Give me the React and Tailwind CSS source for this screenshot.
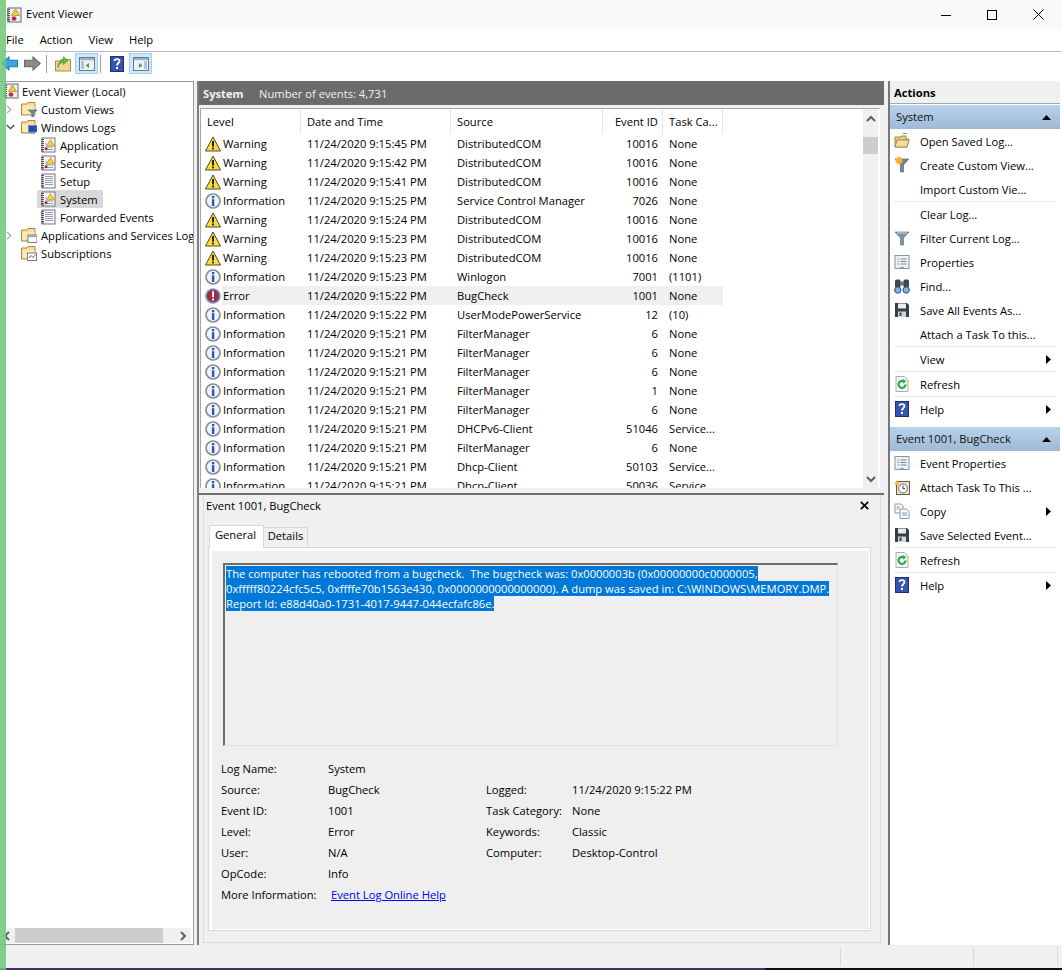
import React from "react";

const I = ({ s = 16, children, className = "" }) => (
  <svg width={s} height={s} viewBox="0 0 16 16" className={"shrink-0 " + className}>{children}</svg>
);

const Warn = () => (
  <I>
    <path d="M8 1 L15.5 15 H0.5 Z" fill="#fbdc3c" stroke="#4a4a30" strokeWidth="1" strokeLinejoin="round" />
    <rect x="7.1" y="5" width="1.8" height="5.6" fill="#111" />
    <rect x="7.1" y="11.6" width="1.8" height="1.8" fill="#111" />
  </I>
);
const Info = () => (
  <I>
    <circle cx="8" cy="8" r="7" fill="#f3f5fa" stroke="#858e9e" strokeWidth="1.7" />
    <rect x="6.9" y="3" width="2.4" height="2.3" fill="#2459b5" />
    <rect x="6.9" y="6.2" width="2.4" height="6.8" fill="#2459b5" />
  </I>
);
const Err = () => (
  <I>
    <circle cx="8" cy="8" r="7" fill="#9c2a48" stroke="#7f9ab8" strokeWidth="1.7" />
    <rect x="7.1" y="3.2" width="1.9" height="6.2" fill="#fff" />
    <rect x="7.1" y="10.6" width="1.9" height="2" fill="#fff" />
  </I>
);
const Log = ({ alert }) => (
  <I>
    <rect x="2" y="1" width="13" height="14" fill="#f8f8f8" stroke="#6f7680" />
    <path d="M1 2.5H4M1 4.5H4M1 6.5H4M1 8.5H4M1 10.5H4M1 12.5H4M1 14H4" stroke="#555" strokeWidth="1" />
    {alert ? (
      <>
        <path d="M10.5 2.5 L14.5 9 H6.5 Z" fill="#f7d23a" stroke="#9b8420" strokeWidth="0.6" />
        <path d="M5 7H7M5 10H13M5 12.5H13" stroke="#8f9fb5" />
        <rect x="4.6" y="10.2" width="3" height="3" rx="1.5" fill="#b3202e" />
      </>
    ) : (
      <path d="M5 3.5H13M5 5.5H13M5 7.5H13M5 9.5H13M5 11.5H13" stroke="#8fa0b8" />
    )}
  </I>
);
const RootLog = () => (
  <I>
    <rect x="2" y="1" width="13" height="14" fill="#eef0f3" stroke="#5f6a78" />
    <path d="M1 2.5H4M1 4.5H4M1 6.5H4M1 8.5H4M1 10.5H4M1 12.5H4M1 14H4" stroke="#555" />
    <path d="M9.5 2 L13.5 8.5 H5.5 Z" fill="#f3cd2e" stroke="#8a7720" strokeWidth="0.6" />
    <circle cx="8" cy="11.5" r="2.6" fill="#b42a3c" stroke="#fff" strokeWidth="0.6" />
  </I>
);
const FolderBase = () => (
  <>
    <path d="M0.5 3 H6 L7 1.5 H14 V14 H0.5 Z" fill="#f7dc9a" stroke="#a98b45" />
    <rect x="1.5" y="5" width="12" height="8" fill="#fbe9b6" />
  </>
);
const FolderFilter = () => (
  <I><FolderBase /><path d="M7 9 H16 L12.8 12.3 V16 H10.8 V12.3 Z" fill="#6f8aa0" stroke="#4c5f70" strokeWidth="0.6" /></I>
);
const FolderMon = () => (
  <I><FolderBase /><rect x="7.5" y="6.5" width="8.5" height="6.5" fill="#1e4fc0" stroke="#6b7a90" strokeWidth="0.6" /><rect x="9" y="13.2" width="5" height="1.6" fill="#8d97a5" /></I>
);
const FolderWin = () => (
  <I><FolderBase /><rect x="7" y="8" width="9" height="7.5" fill="#fff" stroke="#75808c" /><rect x="7.5" y="8.5" width="8" height="1.6" fill="#8ea0b5" /></I>
);
const FolderCal = () => (
  <I><FolderBase /><rect x="6.5" y="8" width="9" height="7.5" fill="#fff" stroke="#75808c" /><path d="M8 13 L10 10.5 L12 12.5 L14.5 9.5" stroke="#c23a3a" fill="none" /></I>
);
const Help = () => (
  <I s={16}>
    <rect x="1.5" y="0.5" width="13" height="15" fill="#3355ad" stroke="#1e2f70" />
    <path d="M5.5 5 C5.5 2.6 10.5 2.6 10.5 5 C10.5 7 8 7 8 9.6" fill="none" stroke="#fff" strokeWidth="1.8" />
    <rect x="7" y="11" width="2" height="2" fill="#fff" />
  </I>
);
const OpenFolder = () => (
  <I>
    <path d="M9 0.5H13" stroke="#55b060" />
    <path d="M1 4 H6 L7 3 H12 V6 H15 L13 14 H1 Z" fill="#e9c77c" stroke="#a58a4f" />
    <path d="M3 7 H15 L13 14 H1 Z" fill="#f3dca0" stroke="#a58a4f" />
  </I>
);
const FilterNew = () => (
  <I>
    <path d="M1 2 H15 L9.5 8 V15 H6.5 V8 Z" fill="#6f8298" stroke="#56677a" strokeWidth="0.6" />
    <circle cx="5" cy="3.5" r="3.5" fill="#f7b62e" />
  </I>
);
const Filter = () => (
  <I>
    <path d="M1 2 H15 L9.5 8 V15 H6.5 V8 Z" fill="#7b93a8" stroke="#56677a" strokeWidth="0.6" />
    <path d="M3 3 H13" stroke="#cfdbe6" />
  </I>
);
const Props = () => (
  <I>
    <rect x="1" y="1.5" width="14" height="13" fill="#eff1f4" stroke="#8a939e" />
    <path d="M3.5 5H5M6.5 5H12.5M3.5 7.5H5M6.5 7.5H12.5M3.5 10H5M6.5 10H12.5" stroke="#7387a0" />
    <rect x="6" y="13" width="4" height="1.5" fill="#52b6e8" />
  </I>
);
const Binoc = () => (
  <I>
    <rect x="1" y="1.5" width="5.5" height="8" rx="1.5" fill="#3f4650" />
    <rect x="9.5" y="1.5" width="5.5" height="8" rx="1.5" fill="#3f4650" />
    <rect x="6" y="3.5" width="4" height="4" fill="#6a7280" />
    <circle cx="3.8" cy="12" r="3.2" fill="#7db2e2" stroke="#2c4f78" />
    <circle cx="12.2" cy="12" r="3.2" fill="#7db2e2" stroke="#2c4f78" />
  </I>
);
const Save = () => (
  <I>
    <path d="M1 1 H13 L15 3 V15 H1 Z" fill="#3a3f46" />
    <rect x="4" y="1.5" width="8" height="5" fill="#e9ecef" />
    <rect x="4" y="9.5" width="8" height="5.5" fill="#d4d7db" />
    <rect x="5.5" y="10.5" width="2" height="3.5" fill="#3a3f46" />
  </I>
);
const Refresh = () => (
  <I>
    <path d="M2 0.5 H10.5 L14 4 V15.5 H2 Z" fill="#f4f5f6" stroke="#a8adb3" />
    <path d="M11.5 8.5 A3.5 3.5 0 1 1 9.8 5.4" fill="none" stroke="#2faa4c" strokeWidth="2.2" />
    <path d="M9 3 L12.5 5.5 L8.8 7.5 Z" fill="#2faa4c" />
  </I>
);
const Task = () => (
  <I>
    <rect x="2.5" y="2.5" width="13" height="13" fill="#e8dfd2" stroke="#6e5a45" />
    <circle cx="9" cy="9.5" r="4.4" fill="#fff" stroke="#6e6e6e" />
    <path d="M9 6.8V9.7H11.2" stroke="#333" fill="none" />
    <path d="M3 0.5L4 2.8L6.2 3.2L4.4 4.6L5 7L3 5.6L1 7L1.6 4.6L0 3.2L2 2.8Z" fill="#f6b73c" />
  </I>
);
const Copy = () => (
  <I>
    <path d="M1 1 H7 L9 3 V10 H1 Z" fill="#fff" stroke="#8a96a4" />
    <path d="M6 6 H12 L15 8.5 V15.5 H6 Z" fill="#fff" stroke="#8a96a4" />
    <path d="M2.5 4H6M2.5 6H5M8 10H13M8 12H13" stroke="#6f9bc8" />
  </I>
);
const BackArrow = () => (
  <I s={17}><path d="M0.8 8 L7.5 1.8 V5 H15.5 V11 H7.5 V14.2 Z" fill="#3ba6df" stroke="#1d7db4" strokeWidth="1" /></I>
);
const FwdArrow = () => (
  <I s={17}><path d="M15.2 8 L8.5 1.8 V5 H0.5 V11 H8.5 V14.2 Z" fill="#8b8b8b" stroke="#666" strokeWidth="1" /></I>
);
const UpFolder = () => (
  <I>
    <path d="M0.5 5 H5 L6 3.5 H15.5 V15 H0.5 Z" fill="#f1d693" stroke="#a98b45" />
    <path d="M3 11.5 C4 8 6 6.5 8.5 6 V8.6 L13 4.6 L8.5 0.8 V3.4 C5 4 2.8 7.5 3 11.5 Z" fill="#6dbb3a" stroke="#3d8a22" strokeWidth="0.6" />
  </I>
);
const PanelIcon = ({ right }) => (
  <span className="flex h-[21px] w-[23px] items-center justify-center border border-[#99d1ff] bg-[#cce8ff]">
    <I>
      <rect x="0.5" y="1.5" width="15" height="13" fill="#eef2f6" stroke="#6c7885" />
      <rect x="1" y="2" width="14" height="2.2" fill="#9fb0c3" />
      {right ? (
        <><path d="M6 7 L9.5 9.5 L6 12 Z" fill="#3aa655" /><path d="M11 6H14M11 8H14M11 10H14M11 12H14" stroke="#7f93aa" /></>
      ) : (
        <><path d="M10 7 L6.5 9.5 L10 12 Z" fill="#3aa655" /><path d="M2 6H5M2 8H5M2 10H5M2 12H5" stroke="#7f93aa" /></>
      )}
    </I>
  </span>
);
const ChevronR = () => (
  <svg width="6" height="9" viewBox="0 0 6 9" className="shrink-0"><path d="M1 0.8 L4.7 4.5 L1 8.2" fill="none" stroke="#a6a6a6" strokeWidth="1.2" /></svg>
);
const ChevronD = () => (
  <svg width="9" height="6" viewBox="0 0 9 6" className="shrink-0"><path d="M0.8 1 L4.5 4.7 L8.2 1" fill="none" stroke="#404040" strokeWidth="1.2" /></svg>
);
const TriR = () => (
  <svg width="5" height="9" viewBox="0 0 5 9" className="ml-auto mr-[9px] shrink-0"><path d="M0 0 L5 4.5 L0 9 Z" fill="#000" /></svg>
);
const TriU = () => (
  <svg width="9" height="5" viewBox="0 0 9 5" className="ml-auto mr-[9px] shrink-0"><path d="M0 5 L4.5 0 L9 5 Z" fill="#000" /></svg>
);

const W = "Warning", N = "Information", DC = "DistributedCOM", FM = "FilterManager";
const rows = [
  [W, "11/24/2020 9:15:45 PM", DC, "10016", "None"],
  [W, "11/24/2020 9:15:42 PM", DC, "10016", "None"],
  [W, "11/24/2020 9:15:41 PM", DC, "10016", "None"],
  [N, "11/24/2020 9:15:25 PM", "Service Control Manager", "7026", "None"],
  [W, "11/24/2020 9:15:24 PM", DC, "10016", "None"],
  [W, "11/24/2020 9:15:23 PM", DC, "10016", "None"],
  [W, "11/24/2020 9:15:23 PM", DC, "10016", "None"],
  [N, "11/24/2020 9:15:23 PM", "Winlogon", "7001", "(1101)"],
  ["Error", "11/24/2020 9:15:22 PM", "BugCheck", "1001", "None"],
  [N, "11/24/2020 9:15:22 PM", "UserModePowerService", "12", "(10)"],
  [N, "11/24/2020 9:15:21 PM", FM, "6", "None"],
  [N, "11/24/2020 9:15:21 PM", FM, "6", "None"],
  [N, "11/24/2020 9:15:21 PM", FM, "6", "None"],
  [N, "11/24/2020 9:15:21 PM", FM, "1", "None"],
  [N, "11/24/2020 9:15:21 PM", FM, "6", "None"],
  [N, "11/24/2020 9:15:21 PM", "DHCPv6-Client", "51046", "Service..."],
  [N, "11/24/2020 9:15:21 PM", FM, "6", "None"],
  [N, "11/24/2020 9:15:21 PM", "Dhcp-Client", "50103", "Service..."],
  [N, "11/24/2020 9:15:21 PM", "Dhcp-Client", "50036", "Service..."],
];

const TreeRow = ({ pad, chevron, icon, label, selected, gap = "pl-[4px]" }) => (
  <div className="flex h-[18px] items-center whitespace-nowrap" style={{ paddingLeft: pad }}>
    {chevron !== undefined && <span className="flex w-[19px] shrink-0 items-center pl-[4px]">{chevron}</span>}
    <div className={"flex h-[18px] items-center " + (selected ? "-ml-[3px] bg-[#d9d9d9] pl-[3px]" : "")}>
      {icon}
      <span className={"pr-[5px] pt-[2px] " + gap}>{label}</span>
    </div>
  </div>
);

const Head = ({ w, children, right }) => (
  <div className={"flex h-[25px] items-center border-r border-[#e5e5e5] pt-[2px] " + w + " " + (right ? "justify-end pr-[4px]" : "pl-[6px]")}>{children}</div>
);

const Action = ({ icon, label, arrow }) => (
  <div className="flex h-6 items-center whitespace-nowrap">
    <span className="flex w-[30px] shrink-0 pl-[4px]">{icon}</span>
    <span className="pt-[2px]">{label}</span>
    {arrow && <TriR />}
  </div>
);
const Sep = () => <div className="mx-[4px] h-px bg-[#e8e8e8]" />;
const ActHead = ({ label }) => (
  <div className="flex h-6 items-center bg-gradient-to-b from-[#b9d2ea] to-[#9fbad6] pl-[6px] text-[#101010]">
    <span>{label}</span>
    <TriU />
  </div>
);

const Field = ({ children, className = "" }) => <div className={"flex items-center whitespace-nowrap " + className}>{children}</div>;

export default function App() {
  return (
    <div className="relative flex h-[970px] w-[1062px] flex-col overflow-hidden bg-white text-[11.2px] text-black [font-family:'Open_Sans','Liberation_Sans',sans-serif]">
      <div className="absolute bottom-0 left-0 top-0 z-10 w-[6px] bg-[#6fc778]/85" />

      <div className="flex h-[29px] shrink-0 items-center bg-[#f9f9f9] pl-[6px]">
        <RootLog />
        <span className="ml-[4px]">Event Viewer</span>
        <div className="ml-auto flex pr-[1px]">
          <div className="flex h-[29px] w-[46px] items-center justify-center">
            <svg width="10" height="10" viewBox="0 0 10 10"><path d="M0 5.5H10" stroke="#000" /></svg>
          </div>
          <div className="flex h-[29px] w-[46px] items-center justify-center">
            <svg width="10" height="10" viewBox="0 0 10 10"><rect x="0.5" y="0.5" width="9" height="9" fill="none" stroke="#000" /></svg>
          </div>
          <div className="flex h-[29px] w-[46px] items-center justify-center">
            <svg width="11" height="11" viewBox="0 0 11 11"><path d="M0.5 0.5L10.5 10.5M10.5 0.5L0.5 10.5" stroke="#000" /></svg>
          </div>
        </div>
      </div>

      <div className="flex h-[23px] shrink-0 items-center gap-4 border-b border-[#b9bcc7] pl-[6px]">
        <span>File</span><span>Action</span><span>View</span><span>Help</span>
      </div>

      <div className="flex h-[29px] shrink-0 items-start pl-[1px] pt-[1px]">
        <div className="flex h-[21px] items-center">
          <BackArrow />
          <span className="ml-[6px]"><FwdArrow /></span>
          <span className="ml-[5px] h-[18px] w-px bg-[#a0a0a0]" />
          <span className="ml-[8px]"><UpFolder /></span>
          <span className="ml-[4px]"><PanelIcon /></span>
          <span className="ml-[2px] h-[18px] w-px bg-[#a0a0a0]" />
          <span className="ml-[8px]"><Help /></span>
          <span className="ml-[4px]"><PanelIcon right /></span>
        </div>
      </div>

      <div className="flex h-[864px] shrink-0 bg-[#f0f0f0]">
        <div className="flex w-[194px] shrink-0 flex-col overflow-hidden border-b border-r border-t border-[#9a9aa2] bg-white">
          <div className="flex-1 overflow-hidden">
            <TreeRow pad={3} icon={<RootLog />} label="Event Viewer (Local)" gap="pl-[3px]" />
            <TreeRow pad={2} chevron={<ChevronR />} icon={<FolderFilter />} label="Custom Views" />
            <TreeRow pad={2} chevron={<ChevronD />} icon={<FolderMon />} label="Windows Logs" />
            <TreeRow pad={40} icon={<Log alert />} label="Application" />
            <TreeRow pad={40} icon={<Log alert />} label="Security" />
            <TreeRow pad={40} icon={<Log />} label="Setup" />
            <TreeRow pad={40} icon={<Log alert />} label="System" selected />
            <TreeRow pad={40} icon={<Log />} label="Forwarded Events" />
            <TreeRow pad={2} chevron={<ChevronR />} icon={<FolderWin />} label="Applications and Services Logs" />
            <TreeRow pad={21} icon={<FolderCal />} label="Subscriptions" />
          </div>
          <div className="mb-[1px] flex h-[15px] w-[191px] shrink-0 items-center bg-[#f0f0f0]">
            <svg width="8" height="10" viewBox="0 0 8 10" className="ml-[3px]"><path d="M6 1 L2 5 L6 9" fill="none" stroke="#606060" strokeWidth="2" /></svg>
            <div className="ml-[4px] h-full w-[148px] bg-[#cdcdcd]" />
            <svg width="8" height="10" viewBox="0 0 8 10" className="ml-[16px]"><path d="M2 1 L6 5 L2 9" fill="none" stroke="#606060" strokeWidth="2" /></svg>
          </div>
        </div>

        <div className="ml-[3px] flex w-[687px] shrink-0 flex-col border-l-2 border-[#808080] pb-[2px]">
          <div className="flex h-[24px] shrink-0 items-center bg-[#6b6b6b] pl-[4px] pt-[2px] text-[#f2f2f2]">
            <span className="w-[56px] font-bold">System</span>
            <span>Number of events: 4,731</span>
          </div>
          <div className="mx-[1px] mt-[3px] flex h-[380px] w-[680px] shrink-0 overflow-hidden border-l border-t border-[#a5a5a5] bg-white">
            <div className="w-[662px] shrink-0 overflow-hidden">
              <div className="flex w-[522px]">
                <Head w="w-[100px]">Level</Head>
                <Head w="w-[150px]">Date and Time</Head>
                <Head w="w-[152px]">Source</Head>
                <Head w="w-[60px]" right>Event ID</Head>
                <Head w="w-[60px]">Task Ca...</Head>
              </div>
              {rows.map((r, i) => (
                <div key={i} className="flex h-[19px] w-[522px] items-center whitespace-nowrap">
                  <div className="flex w-[100px] shrink-0 items-center pl-[4px]">
                    {r[0] === W ? <Warn /> : r[0] === N ? <Info /> : <Err />}
                    <span className={"ml-[1px] flex h-[19px] flex-1 items-center pl-[1px] pt-[2px] " + (r[0] === "Error" ? "bg-[#f0f0f0]" : "")}>{r[0]}</span>
                  </div>
                  <div className={"flex h-[19px] w-[422px] items-center pt-[2px] " + (r[0] === "Error" ? "bg-[#f0f0f0]" : "")}>
                    <span className="w-[150px] pl-[6px]">{r[1]}</span>
                    <span className="w-[152px] pl-[6px]">{r[2]}</span>
                    <span className="w-[60px] pr-[5px] text-right">{r[3]}</span>
                    <span className="w-[60px] pl-[6px]">{r[4]}</span>
                  </div>
                </div>
              ))}
            </div>
            <div className="flex w-[15px] shrink-0 flex-col items-center bg-[#f0f0f0]">
              <svg width="10" height="8" viewBox="0 0 10 8" className="mt-[6px]"><path d="M1 6 L5 2 L9 6" fill="none" stroke="#606060" strokeWidth="2" /></svg>
              <div className="mt-[14px] h-[17px] w-full bg-[#cdcdcd]" />
              <svg width="10" height="8" viewBox="0 0 10 8" className="mb-[5px] mt-auto"><path d="M1 2 L5 6 L9 2" fill="none" stroke="#606060" strokeWidth="2" /></svg>
            </div>
          </div>

          <div className="mt-[5px] flex min-h-0 flex-1 flex-col border-t-2 border-[#6f6f6f]">
            <div className="ml-[4px] mr-[3px] flex min-h-0 flex-1 flex-col border-b border-l border-r border-[#dcdcdc]">
              <div className="flex h-[21px] shrink-0 items-center pl-[2px]">
                <span className="pt-[2px]">Event 1001, BugCheck</span>
                <svg width="9" height="9" viewBox="0 0 9 9" className="ml-auto mr-[11px]"><path d="M0.8 0.8L8.2 8.2M8.2 0.8L0.8 8.2" stroke="#000" strokeWidth="1.7" /></svg>
              </div>
              <div className="mt-[9px] flex h-[22px] shrink-0 items-end pl-[5px]">
                <div className="relative z-10 -mb-px flex h-[23px] w-[55px] items-center justify-center border-l border-r border-t border-[#d9d9d9] bg-white pb-[4px] pr-[2px]">General</div>
                <div className="flex h-[20px] w-[44px] items-center justify-center border-r border-t border-[#d9d9d9] pb-[2px]">Details</div>
              </div>
              <div className="mb-[11px] ml-[4px] mr-[9px] flex min-h-0 flex-1 flex-col border border-[#d9d9d9] bg-white p-[3px] pb-[1px] pr-[1px]">
                <div className="flex min-h-0 flex-1 flex-col bg-[#efefef] pl-[11px] pr-[31px] pt-[12px]">
                  <div className="h-[183px] shrink-0 border-b border-l-2 border-r border-t-2 border-b-[#e3e3e3] border-l-[#6d6d6d] border-r-[#e3e3e3] border-t-[#6d6d6d] pl-[1px] pt-[1px]">
                    <div className="w-fit whitespace-pre bg-[#0078d7] leading-[15px] text-white">The computer has rebooted from a bugcheck.  The bugcheck was: 0x0000003b (0x00000000c0000005,</div>
                    <div className="w-fit whitespace-pre bg-[#0078d7] leading-[15px] text-white">0xfffff80224cfc5c5, 0xffffe70b1563e430, 0x0000000000000000). A dump was saved in: C:\WINDOWS\MEMORY.DMP.</div>
                    <div className="w-fit whitespace-pre bg-[#0078d7] leading-[15px] text-white">Report Id: e88d40a0-1731-4017-9447-044ecfafc86e.</div>
                  </div>
                  <div className="-ml-[2px] mt-[13px] grid grid-cols-[107px_158px_86px_1fr] auto-rows-[21px]">
                    <Field>Log Name:</Field><Field>System</Field><Field /><Field />
                    <Field>Source:</Field><Field>BugCheck</Field><Field>Logged:</Field><Field>11/24/2020 9:15:22 PM</Field>
                    <Field>Event ID:</Field><Field>1001</Field><Field>Task Category:</Field><Field>None</Field>
                    <Field>Level:</Field><Field>Error</Field><Field>Keywords:</Field><Field>Classic</Field>
                    <Field>User:</Field><Field>N/A</Field><Field>Computer:</Field><Field>Desktop-Control</Field>
                    <Field>OpCode:</Field><Field>Info</Field><Field /><Field />
                    <Field>More Information:</Field>
                    <Field className="col-span-3 pl-[3px]"><span className="text-[#0000ee] underline">Event Log Online Help</span></Field>
                  </div>
                </div>
              </div>
            </div>
          </div>
        </div>

        <div className="ml-[4px] flex w-[172px] shrink-0 flex-col border-l-2 border-[#777] bg-white">
          <div className="flex h-[23px] shrink-0 items-center border-b border-[#a8a8a8] bg-[#f0f0f0] pl-[4px] pt-[2px] font-bold">Actions</div>
          <div className="h-px shrink-0" />
          <ActHead label="System" />
          <Action icon={<OpenFolder />} label="Open Saved Log..." />
          <Action icon={<FilterNew />} label="Create Custom View..." />
          <Action label="Import Custom Vie..." />
          <Sep />
          <Action label="Clear Log..." />
          <Action icon={<Filter />} label="Filter Current Log..." />
          <Action icon={<Props />} label="Properties" />
          <Action icon={<Binoc />} label="Find..." />
          <Action icon={<Save />} label="Save All Events As..." />
          <Action label="Attach a Task To this..." />
          <Sep />
          <Action label="View" arrow />
          <Sep />
          <Action icon={<Refresh />} label="Refresh" />
          <Sep />
          <Action icon={<Help />} label="Help" arrow />
          <div className="h-[6px] shrink-0" />
          <ActHead label="Event 1001, BugCheck" />
          <Action icon={<Props />} label="Event Properties" />
          <Action icon={<Task />} label="Attach Task To This ..." />
          <Action icon={<Copy />} label="Copy" arrow />
          <Action icon={<Save />} label="Save Selected Event..." />
          <Sep />
          <Action icon={<Refresh />} label="Refresh" />
          <Sep />
          <Action icon={<Help />} label="Help" arrow />
        </div>
        <div className="w-[2px] shrink-0 bg-white" />
      </div>

      <div className="flex h-[23px] shrink-0 justify-end bg-[#f0f0f0] py-[2px] pr-[4px]">
        <div className="w-[133px] border-l border-[#d9d9d9]" />
        <div className="w-[85px] border-l border-r border-[#d9d9d9]" />
      </div>
      <div className="flex h-[2px] shrink-0">
        <div className="w-[765px] bg-[#3d2f6b]" />
        <div className="flex-1 bg-[#111]" />
      </div>
    </div>
  );
}
